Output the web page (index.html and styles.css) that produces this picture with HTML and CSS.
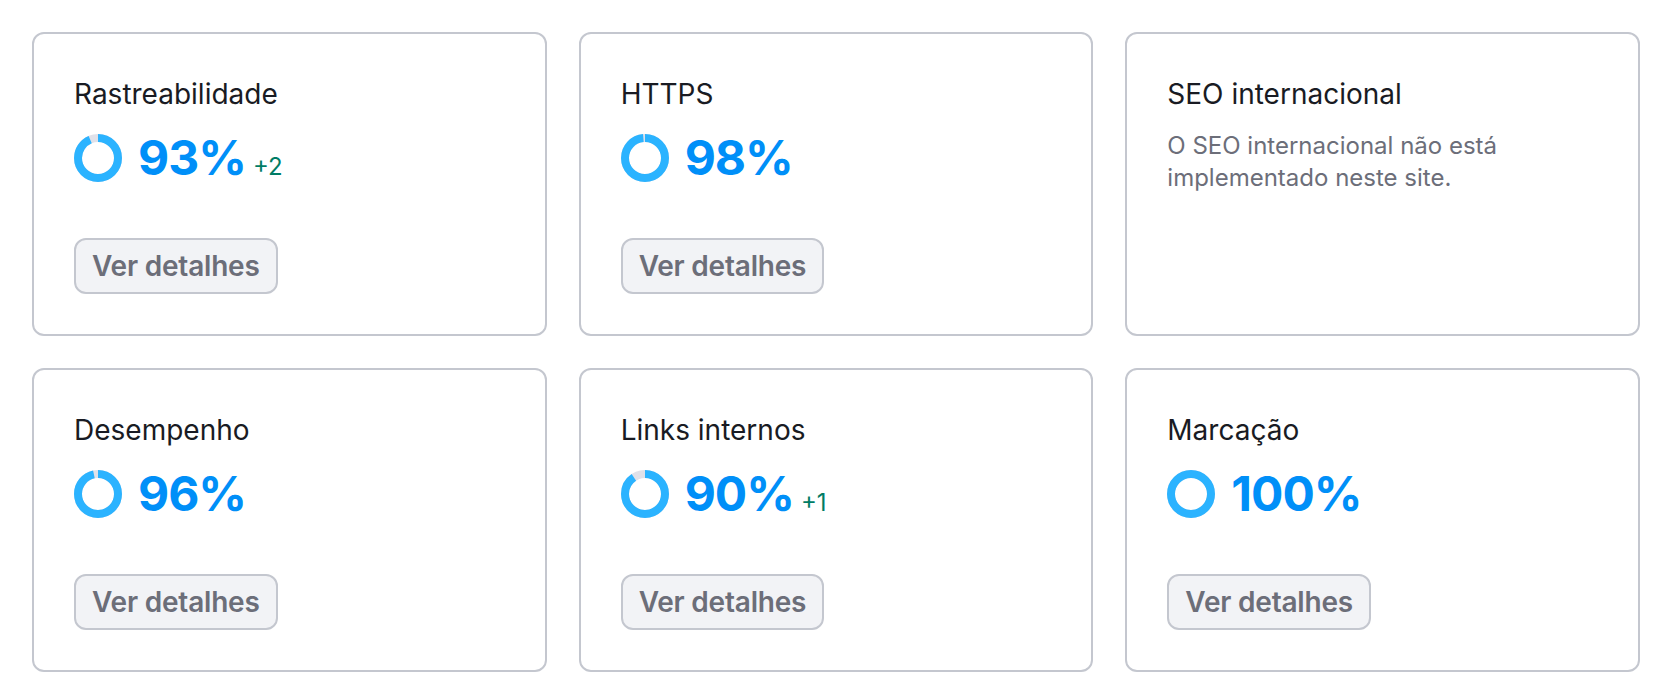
FILE: index.html
```html
<!DOCTYPE html>
<html lang="pt">
<head>
    <meta charset="UTF-8">
    <meta name="viewport" content="width=device-width, initial-scale=1.0">
    <title>Auditoria do site</title>
    <link rel="stylesheet" href="styles.css">
</head>
<body>
    <div class="report-grid">
        <!-- Rastreabilidade -->
        <div class="report-card">
            <div class="card-title">Rastreabilidade</div>
            <div class="score-row">
                <svg class="donut" viewBox="0 0 48 48">
                    <circle class="donut-track" cx="24" cy="24" r="20"></circle>
                    <circle class="donut-value" cx="24" cy="24" r="20" stroke-dasharray="116.87 125.66"></circle>
                </svg>
                <span class="score">93%</span>
                <span class="delta">+2</span>
            </div>
            <button class="details-btn">Ver detalhes</button>
        </div>

        <!-- HTTPS -->
        <div class="report-card">
            <div class="card-title">HTTPS</div>
            <div class="score-row">
                <svg class="donut" viewBox="0 0 48 48">
                    <circle class="donut-track" cx="24" cy="24" r="20"></circle>
                    <circle class="donut-value" cx="24" cy="24" r="20" stroke-dasharray="123.15 125.66"></circle>
                </svg>
                <span class="score">98%</span>
            </div>
            <button class="details-btn">Ver detalhes</button>
        </div>

        <!-- SEO internacional -->
        <div class="report-card">
            <div class="card-title">SEO internacional</div>
            <p class="card-note">O SEO internacional não está implementado neste site.</p>
        </div>

        <!-- Desempenho -->
        <div class="report-card">
            <div class="card-title">Desempenho</div>
            <div class="score-row">
                <svg class="donut" viewBox="0 0 48 48">
                    <circle class="donut-track" cx="24" cy="24" r="20"></circle>
                    <circle class="donut-value" cx="24" cy="24" r="20" stroke-dasharray="120.64 125.66"></circle>
                </svg>
                <span class="score">96%</span>
            </div>
            <button class="details-btn">Ver detalhes</button>
        </div>

        <!-- Links internos -->
        <div class="report-card">
            <div class="card-title">Links internos</div>
            <div class="score-row">
                <svg class="donut" viewBox="0 0 48 48">
                    <circle class="donut-track" cx="24" cy="24" r="20"></circle>
                    <circle class="donut-value" cx="24" cy="24" r="20" stroke-dasharray="113.1 125.66"></circle>
                </svg>
                <span class="score">90%</span>
                <span class="delta">+1</span>
            </div>
            <button class="details-btn">Ver detalhes</button>
        </div>

        <!-- Marcação -->
        <div class="report-card">
            <div class="card-title">Marcação</div>
            <div class="score-row">
                <svg class="donut" viewBox="0 0 48 48">
                    <circle class="donut-track" cx="24" cy="24" r="20"></circle>
                    <circle class="donut-value" cx="24" cy="24" r="20" stroke-dasharray="125.66 125.66"></circle>
                </svg>
                <span class="score">100%</span>
            </div>
            <button class="details-btn">Ver detalhes</button>
        </div>
    </div>
</body>
</html>
```

FILE: styles.css
```css
body {
    font-family: Inter, "Noto Sans", sans-serif;
    background-color: #fff;
    margin: 0;
    padding: 0;
}

.report-grid {
    display: grid;
    grid-template-columns: repeat(3, 1fr);
    gap: 32px;
    width: 1608px;
    padding: 32px 0 0 32px;
}

.report-card {
    display: flex;
    flex-direction: column;
    align-items: flex-start;
    padding: 40px;
    border: 2px solid #c4c7cf;
    border-radius: 12px;
    background-color: #fff;
}

.card-title {
    font-size: 28px;
    line-height: 40px;
    color: #191b23;
}

.score-row {
    display: flex;
    align-items: center;
    height: 56px;
    margin-top: 16px;
}

.donut {
    width: 48px;
    height: 48px;
    margin-right: 16px;
    transform: rotate(-90deg);
}

.donut circle {
    fill: none;
    stroke-width: 8;
}

.donut-track {
    stroke: #e0e1e9;
}

.donut-value {
    stroke: #2bb3ff;
}

.score {
    font-size: 48px;
    line-height: 56px;
    font-weight: 700;
    letter-spacing: -1px;
    color: #008ff8;
}

.delta {
    align-self: flex-end;
    margin-left: 7px;
    margin-bottom: 7px;
    font-size: 24px;
    line-height: 24px;
    color: #007c65;
}

.card-note {
    margin: 16px 0 0;
    max-width: 400px;
    font-size: 24px;
    line-height: 32px;
    color: #6c6e79;
}

.details-btn {
    height: 56px;
    margin-top: 52px;
    padding: 0 16px;
    border: 2px solid #c4c7cf;
    border-radius: 12px;
    background-color: #f2f3f6;
    font-family: inherit;
    font-size: 28px;
    font-weight: 600;
    letter-spacing: -0.2px;
    color: #6c6e79;
    cursor: pointer;
}

.details-btn:hover {
    background-color: #e0e1e9;
}
```
